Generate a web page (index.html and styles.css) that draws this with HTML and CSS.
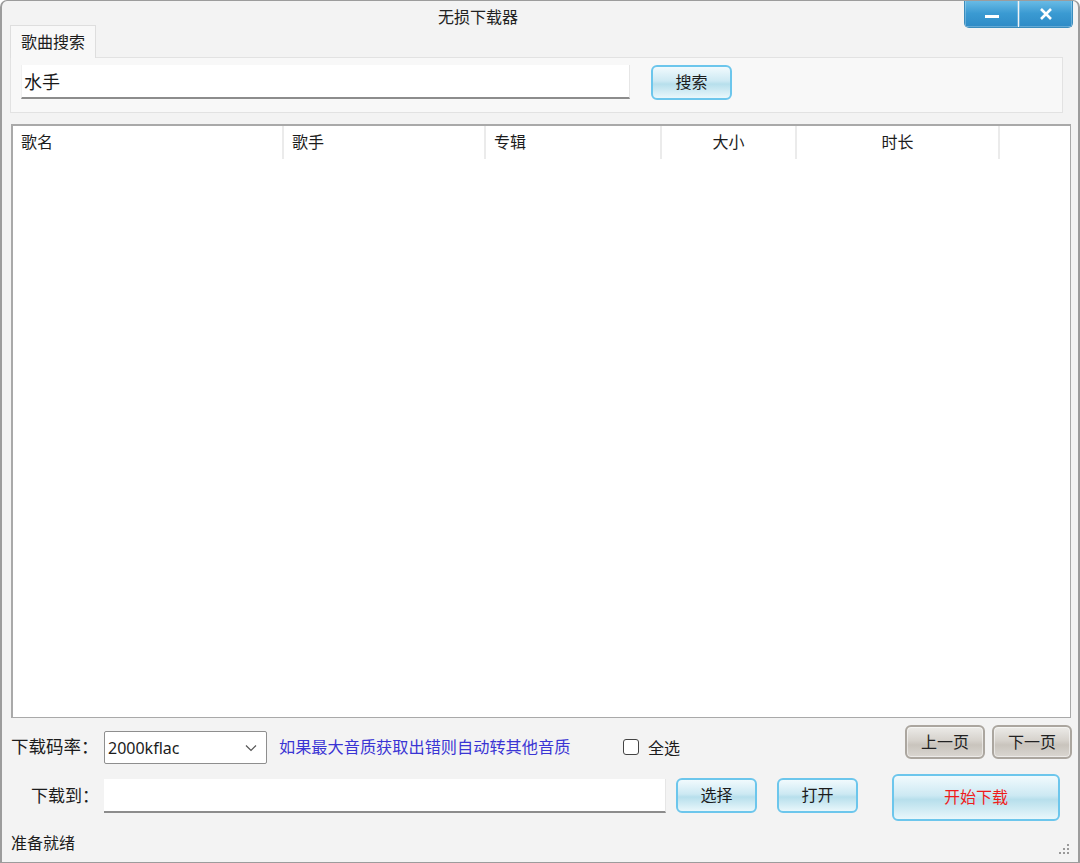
FILE: index.html
```html
<!DOCTYPE html>
<html lang="zh-CN">
<head>
<meta charset="utf-8">
<title>无损下载器</title>
<link rel="stylesheet" href="styles.css">
</head>
<body>
<div class="window">
  <div class="titlebar">
    <div class="title">无损下载器</div>
    <div class="controls">
      <div class="ctl">
        <svg width="20" height="10" viewBox="0 0 20 10"><rect x="3" y="6" width="14" height="3" fill="#fff"/></svg>
      </div>
      <div class="ctl">
        <svg width="20" height="12" viewBox="0 0 20 12"><path d="M5 1 L15 11 M15 1 L5 11" stroke="#fff" stroke-width="2.6"/></svg>
      </div>
    </div>
  </div>

  <div class="tabs">
    <div class="tab">歌曲搜索</div>
  </div>
  <div class="panel">
    <div class="search-input">水手</div>
    <button class="btn blue search-btn">搜索</button>
  </div>

  <div class="list">
    <div class="list-head">
      <div class="col c1">歌名</div>
      <div class="col c2">歌手</div>
      <div class="col c3">专辑</div>
      <div class="col c4 center">大小</div>
      <div class="col c5 center">时长</div>
      <div class="col c6"></div>
    </div>
  </div>

  <div class="row row1">
    <div class="label rate-label">下载码率：</div>
    <div class="combo">
      <span>2000kflac</span>
      <svg width="12" height="8" viewBox="0 0 12 8"><path d="M1 1.5 L6 6.5 L11 1.5" stroke="#555" stroke-width="1.2" fill="none"/></svg>
    </div>
    <div class="hint">如果最大音质获取出错则自动转其他音质</div>
    <div class="check"><span class="box"></span><span>全选</span></div>
    <div class="pager">
      <button class="btn gray">上一页</button>
      <button class="btn gray">下一页</button>
    </div>
  </div>

  <div class="row row2">
    <div class="label to-label">下载到：</div>
    <div class="path-input"></div>
    <button class="btn blue small">选择</button>
    <button class="btn blue small open">打开</button>
    <button class="btn blue start">开始下载</button>
  </div>

  <div class="status">
    <span>准备就绪</span>
    <svg class="grip" width="12" height="12" viewBox="0 0 12 12">
      <g fill="#9a9a9a">
        <rect x="9" y="1" width="2" height="2"/>
        <rect x="5" y="5" width="2" height="2"/><rect x="9" y="5" width="2" height="2"/>
        <rect x="1" y="9" width="2" height="2"/><rect x="5" y="9" width="2" height="2"/><rect x="9" y="9" width="2" height="2"/>
      </g>
    </svg>
  </div>
</div>
</body>
</html>
```

FILE: styles.css
```css
* { box-sizing: border-box; }
html, body {
  margin: 0;
  padding: 0;
  background: #ffffff;
}
body {
  font-family: "Noto Sans CJK SC", "Noto Sans", "DejaVu Sans", sans-serif;
  color: #1c1c1c;
  font-size: 16px;
}
.window {
  width: 1080px;
  height: 863px;
  background: #f3f3f3;
  border: 1px solid #9c9c9c;
  border-left-width: 2px;
  border-right-width: 2px;
  border-radius: 7px 7px 0 0;
  display: flex;
  flex-direction: column;
  overflow: hidden;
}
.titlebar {
  height: 24px;
  display: flex;
  align-items: flex-start;
}
.title {
  margin-left: 436px;
  margin-top: 5px;
  font-size: 16px;
  line-height: 20px;
  color: #222;
}
.controls {
  margin-left: auto;
  margin-right: 5px;
  margin-top: -1px;
  display: flex;
  gap: 1px;
  border: 1px solid #3a8cbc;
  border-top: none;
  border-radius: 0 0 5px 5px;
  overflow: hidden;
}
.ctl {
  width: 53px;
  height: 27px;
  display: flex;
  align-items: center;
  justify-content: center;
  background: linear-gradient(#6cbde6, #3a9ad2 50%, #2e8bc6);
  box-shadow: inset 0 0 0 1px rgba(255,255,255,0.25);
}
.tabs {
  display: flex;
  padding-left: 8px;
  height: 32px;
}
.tab {
  width: 86px;
  height: 33px;
  border: 1px solid #dedede;
  border-bottom: none;
  background: #f8f8f8;
  padding: 4px 0 0 10px;
  font-size: 16px;
  line-height: 22px;
  position: relative;
  z-index: 1;
}
.panel {
  margin: 0 15px 0 8px;
  height: 56px;
  background: #f8f8f8;
  border: 1px solid #e2e2e2;
  display: flex;
  align-items: flex-start;
  padding: 7px 0 0 10px;
}
.search-input {
  width: 609px;
  height: 34px;
  background: #fff;
  border-bottom: 2px solid #8c8c8c;
  border-right: 1px solid #e6e6e6;
  border-left: 1px solid #f0f0f0;
  font-size: 18px;
  line-height: 32px;
  padding-left: 2px;
  color: #1a1a1a;
}
.btn {
  font-family: "Noto Sans CJK SC", "Noto Sans", sans-serif;
  font-size: 16px;
  line-height: 20px;
  color: #1c1c1c;
  padding: 0 0 3px 0;
  cursor: default;
}
.btn.blue {
  border: 2px solid #6cc6ec;
  border-radius: 6px;
  background: linear-gradient(#f1fafd, #cde9f3 45%, #b7dfec 55%, #e9f7fb);
}
.search-btn {
  width: 81px;
  height: 35px;
  margin-left: 21px;
  margin-top: 0;
}
.list {
  margin: 11px 7px 0 9px;
  height: 594px;
  background: #fff;
  border: 2px solid #a9a9a9;
  border-right-width: 1px;
  border-bottom-width: 1px;
}
.list-head {
  display: flex;
  height: 33px;
}
.col {
  height: 33px;
  border-right: 2px solid #ebebeb;
  padding: 3px 0 0 8px;
  font-size: 16px;
  line-height: 24px;
  color: #1c1c1c;
}
.col.center { text-align: center; padding-left: 0; }
.c1 { width: 271px; }
.c2 { width: 202px; }
.c3 { width: 176px; }
.c4 { width: 135px; }
.c5 { width: 203px; }
.c6 { flex: 1; border-right: none; }
.row {
  display: flex;
  align-items: flex-start;
  padding-left: 9px;
  padding-right: 6px;
}
.row1 {
  margin-top: 7px;
  height: 49px;
}
.label {
  font-size: 17px;
  line-height: 24px;
  color: #1c1c1c;
}
.rate-label {
  width: 93px;
  margin-top: 9px;
  font-size: 17.5px;
}
.combo {
  width: 163px;
  height: 33px;
  margin-top: 6px;
  background: #fff;
  border: 1px solid #8e8e8e;
  border-radius: 2px;
  display: flex;
  align-items: center;
  justify-content: space-between;
  padding: 0 9px 0 3px;
  font-family: "Noto Sans", "Open Sans", sans-serif;
  font-size: 16px;
}
.combo span { line-height: 30px; }
.hint {
  margin-left: 12px;
  margin-top: 10px;
  font-size: 16.2px;
  line-height: 22px;
  color: #3a35d4;
  width: 344px;
  white-space: nowrap;
}
.check {
  display: flex;
  align-items: center;
  gap: 9px;
  margin-top: 11px;
  font-size: 16px;
  line-height: 22px;
}
.box {
  width: 16px;
  height: 16px;
  border: 1px solid #444;
  border-radius: 3px;
  background: #fff;
}
.pager {
  margin-left: auto;
  display: flex;
  gap: 7px;
}
.btn.gray {
  width: 80px;
  height: 34px;
  border: 2px solid #aba69f;
  border-radius: 6px;
  background: linear-gradient(#ecebe8, #d6d2cc 45%, #c9c4bd 60%, #dad6d1);
  box-shadow: inset 0 0 0 1px rgba(255,255,255,0.5);
  color: #222;
}
.row2 {
  height: 57px;
}
.to-label {
  width: 93px;
  padding-left: 20px;
  margin-top: 9px;
}
.path-input {
  width: 562px;
  height: 34px;
  margin-top: 5px;
  background: #fff;
  border-bottom: 2px solid #8c8c8c;
  border-right: 1px solid #e6e6e6;
}
.btn.small {
  width: 81px;
  height: 35px;
  margin-top: 4px;
  margin-left: 10px;
}
.btn.small.open { margin-left: 20px; }
.btn.start {
  width: 168px;
  height: 47px;
  margin-left: 34px;
  color: #ef1c1c;
}
.status {
  flex: 1;
  display: flex;
  align-items: flex-start;
  justify-content: space-between;
  padding: 0 8px 0 9px;
  font-size: 16px;
  line-height: 22px;
}
.grip { margin-top: 12px; }
```
